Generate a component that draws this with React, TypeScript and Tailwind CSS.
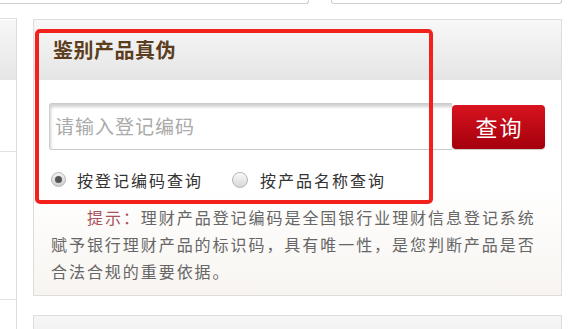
import React from "react";

export default function App() {
  const font = { fontFamily: '"Noto Sans CJK SC", "Noto Sans", sans-serif' };
  return (
    <div
      className="relative w-[572px] h-[329px] overflow-hidden bg-white"
      style={font}
    >
      {/* bottoms of boxes above */}
      <div className="flex h-[4px]">
        <div className="w-[309px] border-b border-r border-[#cfcfcf] rounded-br-[3px]" />
        <div className="ml-[22px] w-[231px] border-b border-l border-r border-[#cfcfcf] rounded-b-[3px]" />
      </div>

      <div className="flex mt-[14px]">
        {/* left column */}
        <div className="w-[17px] h-[320px] border-t border-r border-[#dddddd] flex flex-col">
          <div className="mt-[1px] h-[60px] bg-gradient-to-b from-[#f7f7f7] to-[#e6e6e6]" />
          <div className="mt-[71px] h-[148px] border-t border-[#e2e2e2]" />
          <div className="border-t border-[#e2e2e2]" />
        </div>

        {/* main column */}
        <div className="ml-[16px] w-[529px] flex flex-col">
          <div className="mt-[1px] border border-[#dddddd] flex flex-col">
            <div className="h-[60px] bg-gradient-to-b from-[#f8f8f8] to-[#e5e5e5] flex items-center pl-[19px]">
              <span className="text-[20px] font-semibold text-[#5c3d1e] tracking-[0.5px]">
                鉴别产品真伪
              </span>
            </div>
            <div className="px-[15px] pt-[23px] pb-[10px] bg-gradient-to-b from-white via-white to-[#f8f5f1]">
              <div className="flex items-center h-[47px]">
                <div className="w-[403px] h-[47px] border border-[#cccccc] border-r-0 rounded-l-[3px] bg-white shadow-[inset_1px_3px_3px_rgba(0,0,0,0.18)] flex items-center pl-[5px]">
                  <span className="text-[19px] text-[#aaaaaa] tracking-[1px]">
                    请输入登记编码
                  </span>
                </div>
                <div className="w-[93px] h-[44px] rounded-[4px] bg-gradient-to-b from-[#d8141f] to-[#a4000c] flex items-center justify-center shadow-[0_1px_1px_rgba(0,0,0,0.2)]">
                  <span className="text-[22px] text-white tracking-[2px] ml-[2px]">
                    查询
                  </span>
                </div>
              </div>

              <div className="mt-[16px] h-[27px] flex items-center pl-[2px] text-[16px] tracking-[2px] text-[#333333]">
                <span className="w-[15px] h-[15px] rounded-full border border-[#b5b5b5] bg-gradient-to-b from-[#f2f2f2] to-[#cfcfcf] flex items-center justify-center">
                  <span className="w-[7px] h-[7px] rounded-full bg-[#555555]" />
                </span>
                <span className="ml-[11px]">按登记编码查询</span>
                <span className="ml-[29px] w-[16px] h-[16px] rounded-full border border-[#b5b5b5] bg-gradient-to-b from-[#fafafa] to-[#d6d6d6]" />
                <span className="ml-[12px]">按产品名称查询</span>
              </div>

              <p className="mt-[11px] pl-[2px] pr-[8px] text-[16px] leading-[27px] tracking-[1.95px] text-[#666666] indent-[36px]">
                <span className="text-[#a8525c]">提示：</span>
                理财产品登记编码是全国银行业理财信息登记系统赋予银行理财产品的标识码，具有唯一性，是您判断产品是否合法合规的重要依据。
              </p>
            </div>
          </div>

          <div className="mt-[19px] h-[40px] border border-[#dddddd] bg-gradient-to-b from-[#f6f6f6] to-[#ececec]" />
        </div>
      </div>

      {/* red annotation */}
      <div className="absolute left-[35px] top-[29px] w-[398px] h-[175px] border-[4px] border-[#f2211c] rounded-[5px] pointer-events-none" />
    </div>
  );
}
